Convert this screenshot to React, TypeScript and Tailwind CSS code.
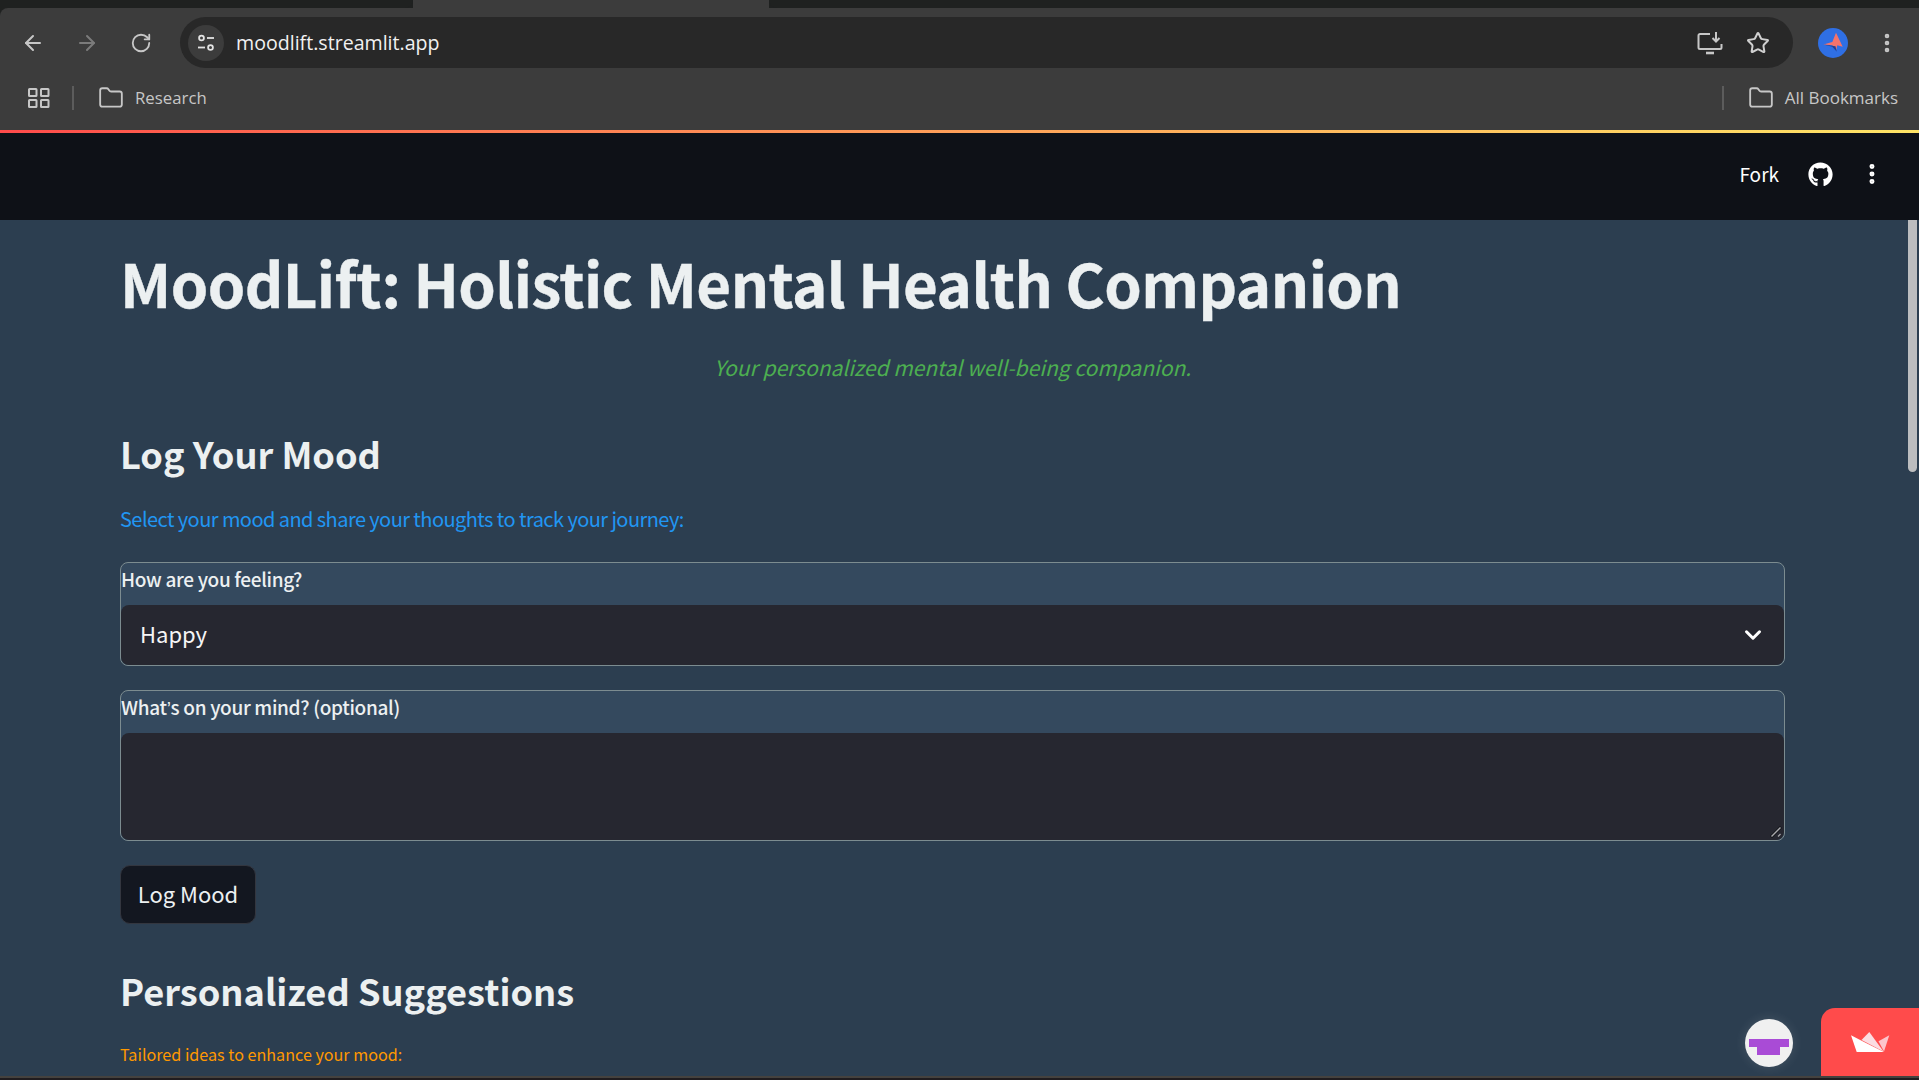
import { ArrowLeft, ArrowRight, ChevronDown, EllipsisVertical, Folder, RotateCw, Star } from "lucide-react";
import { FaGithub } from "react-icons/fa";

const SOURCE = "font-['Noto_Sans_CJK_SC','Noto_Sans',sans-serif]";

function TuneIcon() {
  return (
    <svg width="20" height="20" viewBox="0 0 20 20" fill="none" stroke="#e3e3e3" strokeWidth="1.8">
      <circle cx="5.5" cy="5" r="2.4" />
      <path d="M11 5h7" />
      <circle cx="14.5" cy="14.5" r="2.4" />
      <path d="M2 14.5h7" />
    </svg>
  );
}

function InstallIcon() {
  return (
    <svg width="26" height="24" viewBox="0 0 26 24" fill="none" stroke="#c7c7c7" strokeWidth="2">
      <path d="M13 3H3a1.500 1.500 0 0 0-1.500 1.500v12A1.500 1.500 0 0 0 3 18h20a1.500 1.500 0 0 0 1.500-1.500V13" />
      <path d="M9 22h8" strokeWidth="2.6" />
      <path d="M19 1v9M15.500 7l3.500 3.500L22.500 7" />
    </svg>
  );
}

function AppsIcon() {
  return (
    <svg width="22" height="20" viewBox="0 0 22 20" fill="none" stroke="#c7c7c7" strokeWidth="2">
      <rect x="1" y="1" width="7.500" height="7" rx="0.5" />
      <rect x="13" y="1" width="7.500" height="7" rx="0.5" />
      <rect x="1" y="12" width="7.500" height="7" rx="0.5" />
      <rect x="13" y="12" width="7.500" height="7" rx="0.5" />
    </svg>
  );
}

function ProfileIcon() {
  return (
    <svg width="30" height="30" viewBox="0 0 30 30">
      <circle cx="15" cy="15" r="15" fill="#2f6fe4" />
      <path d="M5.300 16.500l9-2.500L18 4.700l6.700 14-5.400-1.500-1 4.500-4-4.500z" fill="#f4736c" />
      <path d="M5.300 16.500l9 2.200 4.500 5-1.300-5.500z" fill="#25408f" />
    </svg>
  );
}

function CrownIcon() {
  return (
    <svg width="39" height="21" viewBox="0 0 39 21">
      <path d="M10.500 8L18.300 0l14.200 19.500z" fill="#fbdde2" />
      <path d="M27.500 9.300l10.800-6L33 19.500z" fill="#fdc4cb" />
      <path d="M0 3.300L5.700 20H33L14 10.500z" fill="#ffffff" />
    </svg>
  );
}

function BrowserChrome() {
  return (
    <div className="shrink-0 bg-[#1f2120]">
      <div className="flex h-2 justify-between">
        <div className="w-[413px] rounded-br-lg bg-[#1f2120]" />
        <div className="w-[356px] bg-[#3c3c3c]" />
        <div className="flex-1 rounded-bl-lg bg-[#1f2120]" />
      </div>
      <div className="rounded-tl-lg bg-[#3c3c3c]">
        <div className="flex h-[60px] items-center pt-[9px]">
          <div className="flex w-[180px] items-center pl-[21px] text-[#c7c7c7]">
            <ArrowLeft size={24} strokeWidth={2} />
            <ArrowRight size={24} strokeWidth={2} className="ml-[30px] text-[#7b7b7b]" />
            <RotateCw size={22} strokeWidth={2} className="ml-[31px]" />
          </div>
          <div className="flex h-[51px] w-[1613px] items-center rounded-full bg-[#282828] pr-[23px] pl-[8px]">
            <div className="flex h-[36px] w-[36px] items-center justify-center rounded-full bg-[#3c3c3c]">
              <TuneIcon />
            </div>
            <span className="ml-[12px] font-['Open_Sans',sans-serif] text-[19.6px] text-[#f1f1f1]">moodlift.streamlit.app</span>
            <div className="ml-auto flex items-center gap-[23px]">
              <InstallIcon />
              <Star size={24} strokeWidth={2} className="text-[#d0d0d0]" />
            </div>
          </div>
          <div className="ml-[25px]">
            <ProfileIcon />
          </div>
          <EllipsisVertical size={24} strokeWidth={2.6} className="ml-[27px] text-[#c7c7c7]" />
        </div>
        <div className="flex h-[62px] items-center pb-[2px] text-[#c7c7c7]">
          <div className="ml-[28px]">
            <AppsIcon />
          </div>
          <div className="ml-[22px] h-[24px] w-[2px] bg-[#5c5c5c]" />
          <Folder size={26} strokeWidth={1.7} className="ml-[24px]" />
          <span className="ml-[11px] font-['Open_Sans',sans-serif] text-[16.8px]">Research</span>
          <div className="ml-auto h-[24px] w-[2px] bg-[#5c5c5c]" />
          <Folder size={26} strokeWidth={1.7} className="ml-[24px]" />
          <span className="mr-[21px] ml-[11px] font-['Open_Sans',sans-serif] text-[17px]">All Bookmarks</span>
        </div>
      </div>
      <div className="h-[3px] bg-gradient-to-r from-[#ff4b4b] to-[#ffe566]" />
    </div>
  );
}

function FieldBox({ label, children }: { label: React.ReactNode; children: React.ReactNode }) {
  return (
    <div className="w-full rounded-[8px] border border-[#7c8c90] bg-[#34495e]">
      <p className="h-[42px] pt-[2px] text-[19px] leading-[28px] font-medium tracking-[-0.32px] text-[#ecf0f1]">{label}</p>
      {children}
    </div>
  );
}

export default function App() {
  return (
    <div className={`relative flex h-screen w-full flex-col overflow-hidden bg-[#201c1f] ${SOURCE}`}>
      <BrowserChrome />

      <header className="flex h-[87px] shrink-0 items-center justify-end bg-[#0e1117] pr-[34px] pb-[5px] text-white">
        <span className="text-[19px]">Fork</span>
        <FaGithub size={25} className="ml-[29px]" />
        <EllipsisVertical size={26} strokeWidth={2.6} className="ml-[26px]" />
      </header>

      <main className="h-[856px] shrink-0 overflow-hidden bg-[#2c3e50] pr-[134px] pl-[120px]">
        <h1 className="mt-[22px] text-[60px] leading-[80px] font-bold tracking-[-0.55px] text-[#ecf0f1] [-webkit-text-stroke:0.4px_#ecf0f1]">MoodLift: Holistic Mental Health Companion</h1>
        <p className="mt-[29px] text-center text-[21px] leading-[32px] text-[#4caf50] italic">Your personalized mental well-being companion.</p>
        <h2 className="mt-[42px] text-[36.2px] leading-[56px] font-semibold text-[#ecf0f1]">Log Your Mood</h2>
        <p className="mt-[22px] text-[20px] leading-[32px] tracking-[-0.56px] text-[#2196f3]">Select your mood and share your thoughts to track your journey:</p>
        <div className="mt-[27px]">
          <FieldBox label="How are you feeling?">
            <div className="flex h-[60px] items-center justify-between rounded-[8px] bg-[#262730] pr-[18px] pl-[19px] text-[22px] text-[#f5f5f5]">
              <span className="pb-[3px]">Happy</span>
              <ChevronDown size={26} strokeWidth={2.8} className="text-white" />
            </div>
          </FieldBox>
        </div>
        <div className="mt-[24px]">
          <FieldBox label={<>What<span className="font-['Liberation_Sans',sans-serif]">’</span>s on your mind? (optional)</>}>
            <div className="relative">
              <textarea aria-label="What’s on your mind?" className="block h-[107px] w-full resize-none rounded-[8px] bg-[#262730] outline-none" />
              <svg width="12" height="12" viewBox="0 0 12 12" className="absolute right-[2px] bottom-[2px]" fill="none">
                <path d="M1 11L11 1" stroke="#111217" strokeWidth="3" />
                <path d="M1.500 10.500L10.500 1.500" stroke="#a9a9ad" strokeWidth="1.4" />
                <path d="M8 10.500l2.500-2.500" stroke="#a9a9ad" strokeWidth="1.2" />
              </svg>
            </div>
          </FieldBox>
        </div>
        <button type="button" className="mt-[24px] h-[59px] w-[136px] rounded-[10px] border border-[#33363f] bg-[#131720] pb-[3px] text-[22px] text-[#ecf0f1]">
          Log Mood
        </button>
        <h2 className="mt-[38px] text-[36.2px] leading-[56px] font-semibold text-[#ecf0f1]">Personalized Suggestions</h2>
        <p className="mt-[23px] text-[16.15px] leading-[26px] text-[#ff9800]">Tailored ideas to enhance your mood:</p>
      </main>

      <div className="h-[2px] shrink-0 bg-[#45423f]" />

      <div className="absolute top-[220px] right-[2px] h-[252px] w-[9px] rounded-b-full bg-[#bcbdbf]" />
      <div className="absolute top-[1019px] left-[1745px] flex h-[48px] w-[48px] items-center justify-center rounded-full bg-[#f0f0f0] shadow-[0_0_12px_rgba(255,255,255,0.12)]">
        <svg width="40" height="16" viewBox="0 0 40 16" className="mt-[8px]">
          <path d="M0 0h40v8h-9v8H8V8H0z" fill="#a94bd6" />
        </svg>
      </div>
      <div className="absolute top-[1008px] right-0 flex h-[68px] w-[98px] items-center justify-center rounded-tl-[14px] bg-[#ff4b4b]">
        <CrownIcon />
      </div>
    </div>
  );
}
